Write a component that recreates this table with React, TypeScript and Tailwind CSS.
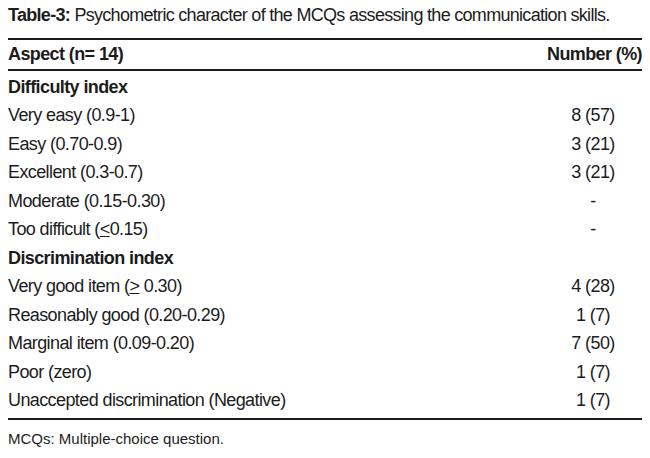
const ROWS: { label: React.ReactNode; value?: string; heading?: boolean }[] = [
  { label: 'Difficulty index', heading: true },
  { label: 'Very easy (0.9-1)', value: '8 (57)' },
  { label: 'Easy (0.70-0.9)', value: '3 (21)' },
  { label: 'Excellent (0.3-0.7)', value: '3 (21)' },
  { label: 'Moderate (0.15-0.30)', value: '-' },
  { label: <>Too difficult (<span className="underline underline-offset-1">&lt;</span>0.15)</>, value: '-' },
  { label: 'Discrimination index', heading: true },
  { label: <>Very good item (<span className="underline underline-offset-1">&gt;</span> 0.30)</>, value: '4 (28)' },
  { label: 'Reasonably good (0.20-0.29)', value: '1 (7)' },
  { label: 'Marginal item (0.09-0.20)', value: '7 (50)' },
  { label: 'Poor (zero)', value: '1 (7)' },
  { label: 'Unaccepted discrimination (Negative)', value: '1 (7)' },
];

export default function App() {
  return (
    <div className="w-[650px] h-[458px] bg-white text-[#1c1c1c] px-[8px] pt-[4px] font-['Liberation_Sans',sans-serif] tracking-[-0.6px]">
      <p className="text-[18px] leading-[22px] tracking-[-0.7px]">
        <span className="font-bold">Table-3:</span> Psychometric character of the MCQs assessing the communication skills.
      </p>

      <div className="mt-[12px] border-t-2 border-b-2 border-[#1c1c1c] h-[33px] flex items-center justify-between text-[18px] font-bold">
        <span>Aspect (n= 14)</span>
        <span>Number (%)</span>
      </div>

      <div className="pt-[2px] pb-[3px] border-b-2 border-[#1c1c1c]">
        {ROWS.map((row, i) => (
          <div key={i} className="h-[28.5px] flex items-center text-[18px]">
            <span className={row.heading ? 'flex-1 font-bold' : 'flex-1'}>{row.label}</span>
            {row.value && <span className="w-[88px] mr-[5px] text-center">{row.value}</span>}
          </div>
        ))}
      </div>

      <p className="mt-[9px] text-[15px] leading-[20px] tracking-normal">MCQs: Multiple-choice question.</p>
    </div>
  );
}
